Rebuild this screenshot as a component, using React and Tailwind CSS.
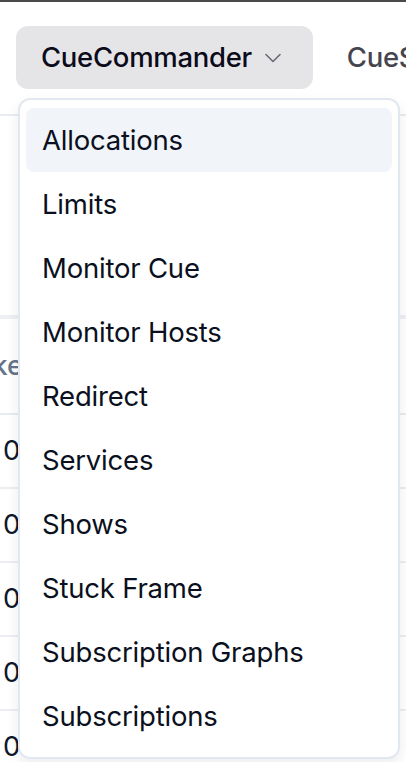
import { ChevronDown } from 'lucide-react';

const menuItems = [
  'Allocations',
  'Limits',
  'Monitor Cue',
  'Monitor Hosts',
  'Redirect',
  'Services',
  'Shows',
  'Stuck Frame',
  'Subscription Graphs',
  'Subscriptions',
];

const rows = ['0', '0', '0', '0', '0'];

export default function App() {
  return (
    <div className="relative h-[762px] w-[406px] overflow-hidden bg-white font-['Inter',sans-serif] text-[#0f172a]">
      {/* Top strip */}
      <div className="h-[2px] bg-[#4a4a4a]" />

      {/* Nav */}
      <nav className="flex items-center gap-[9px] border-b-2 border-[#e8ebf0] pl-4 pt-6 pb-[25px]">
        <button className="flex h-[63px] shrink-0 items-center rounded-[12px] bg-[#e5e5e8] pl-[25px] pr-[26px] pt-[1px] text-[27.5px] font-medium tracking-[-0.3px] text-[#0b0b1a]">
          CueCommander
          <ChevronDown className="ml-[7px] h-7 w-7 text-[#6b6b76]" strokeWidth={1.4} />
        </button>
        <button className="flex h-[63px] shrink-0 items-center whitespace-nowrap px-[25px] pt-[1px] text-[27.5px] font-medium tracking-[-0.3px] text-[#45454f]">
          CueSubmit
        </button>
      </nav>

      {/* Table behind the menu */}
      <div className="mt-[199px] border-t-4 border-[#eef0f4]">
        <div className="flex h-[96px] items-center border-b-2 border-[#e8ebf0] text-[27.5px] font-medium text-[#64748b]">
          <span className="-ml-[52px]">Brake</span>
        </div>
        {rows.map((r, i) => (
          <div key={i} className="flex h-[74px] items-center border-b-2 border-[#eceef2] pl-[3px] text-[27.5px]">
            {r}
          </div>
        ))}
      </div>

      {/* Dropdown menu */}
      <div className="absolute left-[18px] top-[98px] w-[382px] rounded-[12px] border-2 border-[#e2e8f0] bg-white px-[6px] pt-2 pb-[9px] shadow-[0_6px_14px_rgba(15,23,42,0.08)]">
        {menuItems.map((item, i) => (
          <div
            key={item}
            className={`flex h-[64px] items-center rounded-[8px] px-[16px] pt-[1px] text-[27.5px] tracking-[-0.2px] text-[#0b1020] ${i === 0 ? 'bg-[#f1f4f9]' : ''}`}
          >
            {item}
          </div>
        ))}
      </div>
    </div>
  );
}
